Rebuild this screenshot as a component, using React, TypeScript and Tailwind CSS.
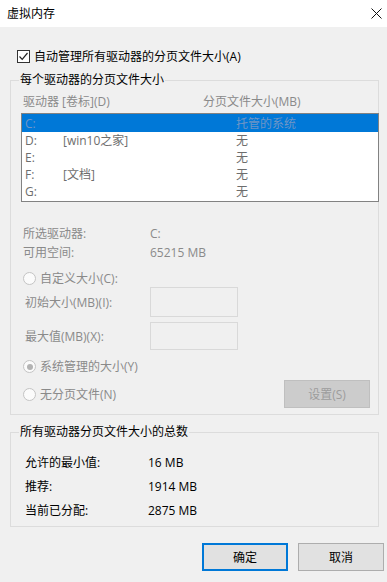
import React from "react";

const font = { fontFamily: '"Open Sans", "Noto Sans CJK SC", sans-serif' };

type Drive = { letter: string; label: string; size: string; selected?: boolean };

const drives: Drive[] = [
  { letter: "C:", label: "", size: "托管的系统", selected: true },
  { letter: "D:", label: "[win10之家]", size: "无" },
  { letter: "E:", label: "", size: "无" },
  { letter: "F:", label: "[文档]", size: "无" },
  { letter: "G:", label: "", size: "无" },
];

function Radio({ checked }: { checked?: boolean }) {
  return (
    <span className="flex h-[13px] w-[13px] shrink-0 items-center justify-center rounded-full border border-[#c4c4c4] bg-[#fbfbfb]">
      {checked && <span className="h-[6px] w-[6px] rounded-full bg-[#b3b3b3]" />}
    </span>
  );
}

function Group({
  title,
  className,
  children,
}: {
  title: string;
  className: string;
  children: React.ReactNode;
}) {
  return (
    <div className={"relative mx-[10px] w-[369px] border border-[#dcdcdc] " + className}>
      <span className="absolute -top-[10px] left-[8px] bg-[#f0f0f0] px-[1px] text-[12px] leading-[17px] text-black">
        {title}
      </span>
      {children}
    </div>
  );
}

export default function App() {
  return (
    <div
      className="flex h-[582px] w-[387px] flex-col overflow-hidden bg-[#f0f0f0] text-[12px] leading-[17px]"
      style={font}
    >
      {/* title bar */}
      <div className="flex h-[27px] shrink-0 items-center justify-between bg-white pl-[7px] pr-[5px]">
        <span className="text-black">虚拟内存</span>
        <svg width="11" height="11" viewBox="0 0 11 11" className="mb-[1px]">
          <path d="M0.5 0.5 L10.5 10.5 M10.5 0.5 L0.5 10.5" stroke="#111" strokeWidth="1" />
        </svg>
      </div>

      {/* auto manage */}
      <div className="mt-[23px] flex h-[13px] items-center pl-[17px]">
        <span className="flex h-[13px] w-[13px] items-center justify-center border border-[#333] bg-white">
          <svg width="11" height="11" viewBox="0 0 11 11">
            <path d="M1.5 5.5 L4.2 8.3 L9.5 2" fill="none" stroke="#222" strokeWidth="1.2" />
          </svg>
        </span>
        <span className="ml-[4px] text-black">自动管理所有驱动器的分页文件大小(A)</span>
      </div>

      {/* per drive */}
      <Group title="每个驱动器的分页文件大小" className="mt-[17px] h-[335px]">
        <div className="mt-[12px] flex h-[17px] pl-[12px] text-[#8a8a8a]">
          <span className="w-[180px]">驱动器 [卷标](D)</span>
          <span>分页文件大小(MB)</span>
        </div>

        <div className="ml-[10px] mt-[3px] h-[89px] w-[358px] border border-[#828282] bg-white pb-[1px]">
          {drives.map((d) => (
            <div
              key={d.letter}
              className={
                "grid grid-cols-[38px_173px_1fr] items-center pl-[3px] " +
                (d.selected
                  ? "h-[18px] bg-[#0078d7] text-[#6f95c6]"
                  : "h-[17px] text-[#6d6d6d]")
              }
            >
              <span>{d.letter}</span>
              <span>{d.label}</span>
              <span>{d.size}</span>
            </div>
          ))}
        </div>

        <div className="mt-[22px] flex flex-col pl-[12px] text-[#8a8a8a]">
          <div className="flex h-[19px] items-center">
            <span className="w-[127px]">所选驱动器:</span>
            <span>C:</span>
          </div>
          <div className="flex h-[19px] items-center">
            <span className="w-[127px]">可用空间:</span>
            <span>65215 MB</span>
          </div>
        </div>

        <div className="mt-[8px] flex h-[17px] items-center gap-[4px] pl-[12px] text-[#8a8a8a]">
          <Radio />
          <span>自定义大小(C):</span>
        </div>

        <div className="flex h-[30px] items-center pl-[14px] text-[#8a8a8a]">
          <span className="w-[125px]">初始大小(MB)(I):</span>
          <span className="h-[30px] w-[88px] border border-[#d9d9d9] bg-[#f0f0f0]" />
        </div>
        <div className="mt-[5px] flex h-[28px] items-center pl-[14px] text-[#8a8a8a]">
          <span className="w-[125px]">最大值(MB)(X):</span>
          <span className="h-[28px] w-[88px] border border-[#d9d9d9] bg-[#f0f0f0]" />
        </div>

        <div className="mt-[8px] flex h-[17px] items-center gap-[4px] pl-[12px] text-[#8a8a8a]">
          <Radio checked />
          <span>系统管理的大小(Y)</span>
        </div>

        <div className="mt-[5px] flex h-[28px] items-center pl-[12px] pr-[8px] text-[#8a8a8a]">
          <Radio />
          <span className="ml-[4px]">无分页文件(N)</span>
          <button
            type="button"
            className="ml-auto h-[28px] w-[86px] border border-[#bfbfbf] bg-[#cccccc] text-[#9c9c9c]"
          >
            设置(S)
          </button>
        </div>
      </Group>

      {/* totals */}
      <Group title="所有驱动器分页文件大小的总数" className="mt-[17px] h-[95px]">
        <div className="mt-[17px] flex flex-col pl-[14px] text-black">
          {[
            ["允许的最小值:", "16 MB"],
            ["推荐:", "1914 MB"],
            ["当前已分配:", "2875 MB"],
          ].map(([k, v]) => (
            <div key={k} className="flex h-[24px] items-center">
              <span className="w-[123px]">{k}</span>
              <span>{v}</span>
            </div>
          ))}
        </div>
      </Group>

      <div className="mt-[16px] flex gap-[10px] pl-[202px]">
        <button
          type="button"
          className="h-[28px] w-[86px] border-2 border-[#0078d7] bg-[#e1e1e1] text-black"
        >
          确定
        </button>
        <button
          type="button"
          className="h-[28px] w-[86px] border border-[#adadad] bg-[#e1e1e1] text-black"
        >
          取消
        </button>
      </div>
    </div>
  );
}
